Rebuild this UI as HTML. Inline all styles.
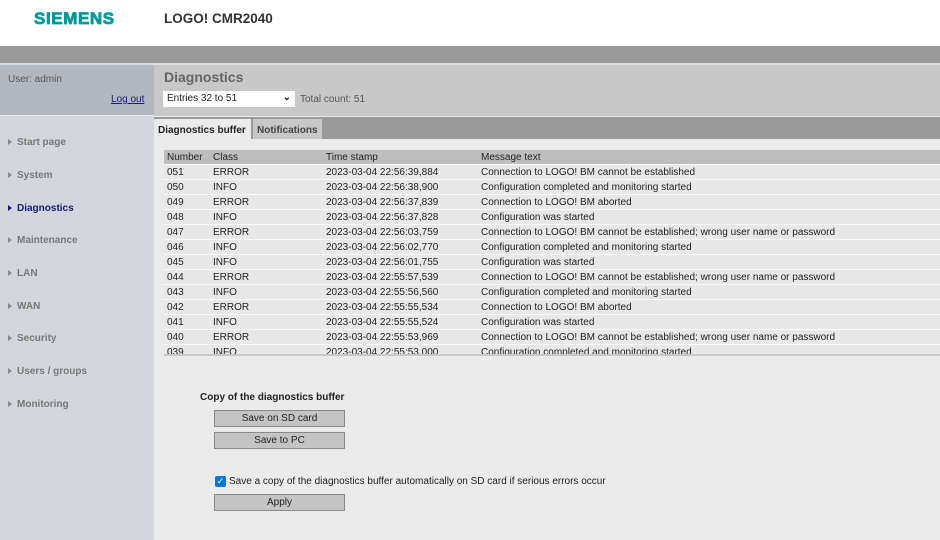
<!DOCTYPE html>
<html><head><style>
*{margin:0;padding:0;box-sizing:border-box}
body{width:940px;height:540px;overflow:hidden;font-family:"Liberation Sans",Arial,sans-serif;font-size:10px;color:#222;background:#ebebeb;position:relative}
.abs{position:absolute}
#hdr{left:0;top:0;width:940px;height:46px;background:#fff}
#logo{left:34px;top:9px;font-size:17px;font-weight:bold;color:#009999;letter-spacing:0.6px;-webkit-text-stroke:0.8px #009999}
#title{left:164px;top:11px;font-size:13.5px;font-weight:bold;color:#333}
#bar{left:0;top:46px;width:940px;height:17px;background:#9a9a9a}
#bar2{left:0;top:63px;width:940px;height:2px;background:#dcdcdc}
#user{left:0;top:65px;width:154px;height:50px;background:#b3b7c0}
#nav{left:0;top:116px;width:154px;height:424px;background:#d3d6dc}
#mh{left:154px;top:65px;width:786px;height:51px;background:#c8c8c8}
#tabs{left:154px;top:117px;width:786px;height:22px;background:#9a9a9a}
.tab{position:absolute;top:2px;height:20px;font-weight:bold;padding:6px 4px 0;background:#c8c8c8;color:#444;white-space:nowrap}
.nav{position:absolute;left:8px;font-weight:bold;color:#777;font-size:10px}
.nav:before{content:"";display:inline-block;border-left:4px solid #888;border-top:3px solid transparent;border-bottom:3px solid transparent;margin-right:5px;vertical-align:0}
.nav.act{color:#1a1a7a}.nav.act:before{border-left-color:#1a1a7a}
#tbl{left:164px;top:150px;width:776px;height:205px;overflow:hidden}
.r{position:absolute;left:0;width:776px;height:15px;background:#e8e8e8;border-bottom:1px solid #fafafa}
.r span{position:absolute;top:2px;white-space:nowrap}
.h{background:#bebebe}
.btn{position:absolute;left:214px;width:131px;height:17px;background:#c4c4c4;border:1px solid #8a8a8a;text-align:center;font-size:10px;line-height:15px}
</style></head><body>
<div id="hdr" class="abs"></div>
<div id="logo" class="abs">SIEMENS</div>
<div id="title" class="abs">LOGO! CMR2040</div>
<div id="bar" class="abs"></div><div id="bar2" class="abs"></div>
<div id="user" class="abs"><div class="abs" style="left:8px;top:9px;color:#555">User: admin</div><div class="abs" style="left:111px;top:29px;color:#1a1a7a;text-decoration:underline">Log out</div></div>
<div id="nav" class="abs">
<div class="nav" style="top:21px">Start page</div>
<div class="nav" style="top:54px">System</div>
<div class="nav act" style="top:87px">Diagnostics</div>
<div class="nav" style="top:119px">Maintenance</div>
<div class="nav" style="top:152px">LAN</div>
<div class="nav" style="top:185px">WAN</div>
<div class="nav" style="top:217px">Security</div>
<div class="nav" style="top:250px">Users / groups</div>
<div class="nav" style="top:283px">Monitoring</div>
</div>
<div id="mh" class="abs">
<div class="abs" style="left:10px;top:4px;font-size:14px;font-weight:bold;color:#666">Diagnostics</div>
<div class="abs" style="left:9px;top:26px;width:132px;height:16px;background:#fff;padding:2px 4px;color:#222">Entries 32 to 51<span style="position:absolute;right:4px;top:1px;font-weight:bold">&#8964;</span></div>
<div class="abs" style="left:146px;top:29px;color:#555">Total count: 51</div>
</div>
<div id="tabs" class="abs">
<div class="tab" style="left:0;width:97px;background:#ebebeb;color:#222;height:21px">Diagnostics buffer</div>
<div class="tab" style="left:99px;width:69px">Notifications</div>
</div>
<div id="tbl" class="abs">
<div class="r h" style="top:0"><span style="left:3px">Number</span><span style="left:49px">Class</span><span style="left:162px">Time stamp</span><span style="left:317px">Message text</span></div>
<div class="r" style="top:15px"><span style="left:3px">051</span><span style="left:49px">ERROR</span><span style="left:162px">2023-03-04 22:56:39,884</span><span style="left:317px">Connection to LOGO! BM cannot be established</span></div>
<div class="r" style="top:30px"><span style="left:3px">050</span><span style="left:49px">INFO</span><span style="left:162px">2023-03-04 22:56:38,900</span><span style="left:317px">Configuration completed and monitoring started</span></div>
<div class="r" style="top:45px"><span style="left:3px">049</span><span style="left:49px">ERROR</span><span style="left:162px">2023-03-04 22:56:37,839</span><span style="left:317px">Connection to LOGO! BM aborted</span></div>
<div class="r" style="top:60px"><span style="left:3px">048</span><span style="left:49px">INFO</span><span style="left:162px">2023-03-04 22:56:37,828</span><span style="left:317px">Configuration was started</span></div>
<div class="r" style="top:75px"><span style="left:3px">047</span><span style="left:49px">ERROR</span><span style="left:162px">2023-03-04 22:56:03,759</span><span style="left:317px">Connection to LOGO! BM cannot be established; wrong user name or password</span></div>
<div class="r" style="top:90px"><span style="left:3px">046</span><span style="left:49px">INFO</span><span style="left:162px">2023-03-04 22:56:02,770</span><span style="left:317px">Configuration completed and monitoring started</span></div>
<div class="r" style="top:105px"><span style="left:3px">045</span><span style="left:49px">INFO</span><span style="left:162px">2023-03-04 22:56:01,755</span><span style="left:317px">Configuration was started</span></div>
<div class="r" style="top:120px"><span style="left:3px">044</span><span style="left:49px">ERROR</span><span style="left:162px">2023-03-04 22:55:57,539</span><span style="left:317px">Connection to LOGO! BM cannot be established; wrong user name or password</span></div>
<div class="r" style="top:135px"><span style="left:3px">043</span><span style="left:49px">INFO</span><span style="left:162px">2023-03-04 22:55:56,560</span><span style="left:317px">Configuration completed and monitoring started</span></div>
<div class="r" style="top:150px"><span style="left:3px">042</span><span style="left:49px">ERROR</span><span style="left:162px">2023-03-04 22:55:55,534</span><span style="left:317px">Connection to LOGO! BM aborted</span></div>
<div class="r" style="top:165px"><span style="left:3px">041</span><span style="left:49px">INFO</span><span style="left:162px">2023-03-04 22:55:55,524</span><span style="left:317px">Configuration was started</span></div>
<div class="r" style="top:180px"><span style="left:3px">040</span><span style="left:49px">ERROR</span><span style="left:162px">2023-03-04 22:55:53,969</span><span style="left:317px">Connection to LOGO! BM cannot be established; wrong user name or password</span></div>
<div class="r" style="top:195px"><span style="left:3px">039</span><span style="left:49px">INFO</span><span style="left:162px">2023-03-04 22:55:53,000</span><span style="left:317px">Configuration completed and monitoring started</span></div>
</div>
<div class="abs" style="left:164px;top:354px;width:776px;height:2px;background:#c8c8c8"></div>
<div class="abs" style="left:200px;top:392px;font-weight:bold">Copy of the diagnostics buffer</div>
<div class="btn" style="top:410px">Save on SD card</div>
<div class="btn" style="top:432px">Save to PC</div>
<div class="abs" style="left:215px;top:476px;width:11px;height:11px;background:#0b75d8;border-radius:2px;color:#fff;font-size:9px;line-height:11px;text-align:center">&#10003;</div>
<div class="abs" style="left:229px;top:476px">Save a copy of the diagnostics buffer automatically on SD card if serious errors occur</div>
<div class="btn" style="top:494px">Apply</div>
</body></html>
